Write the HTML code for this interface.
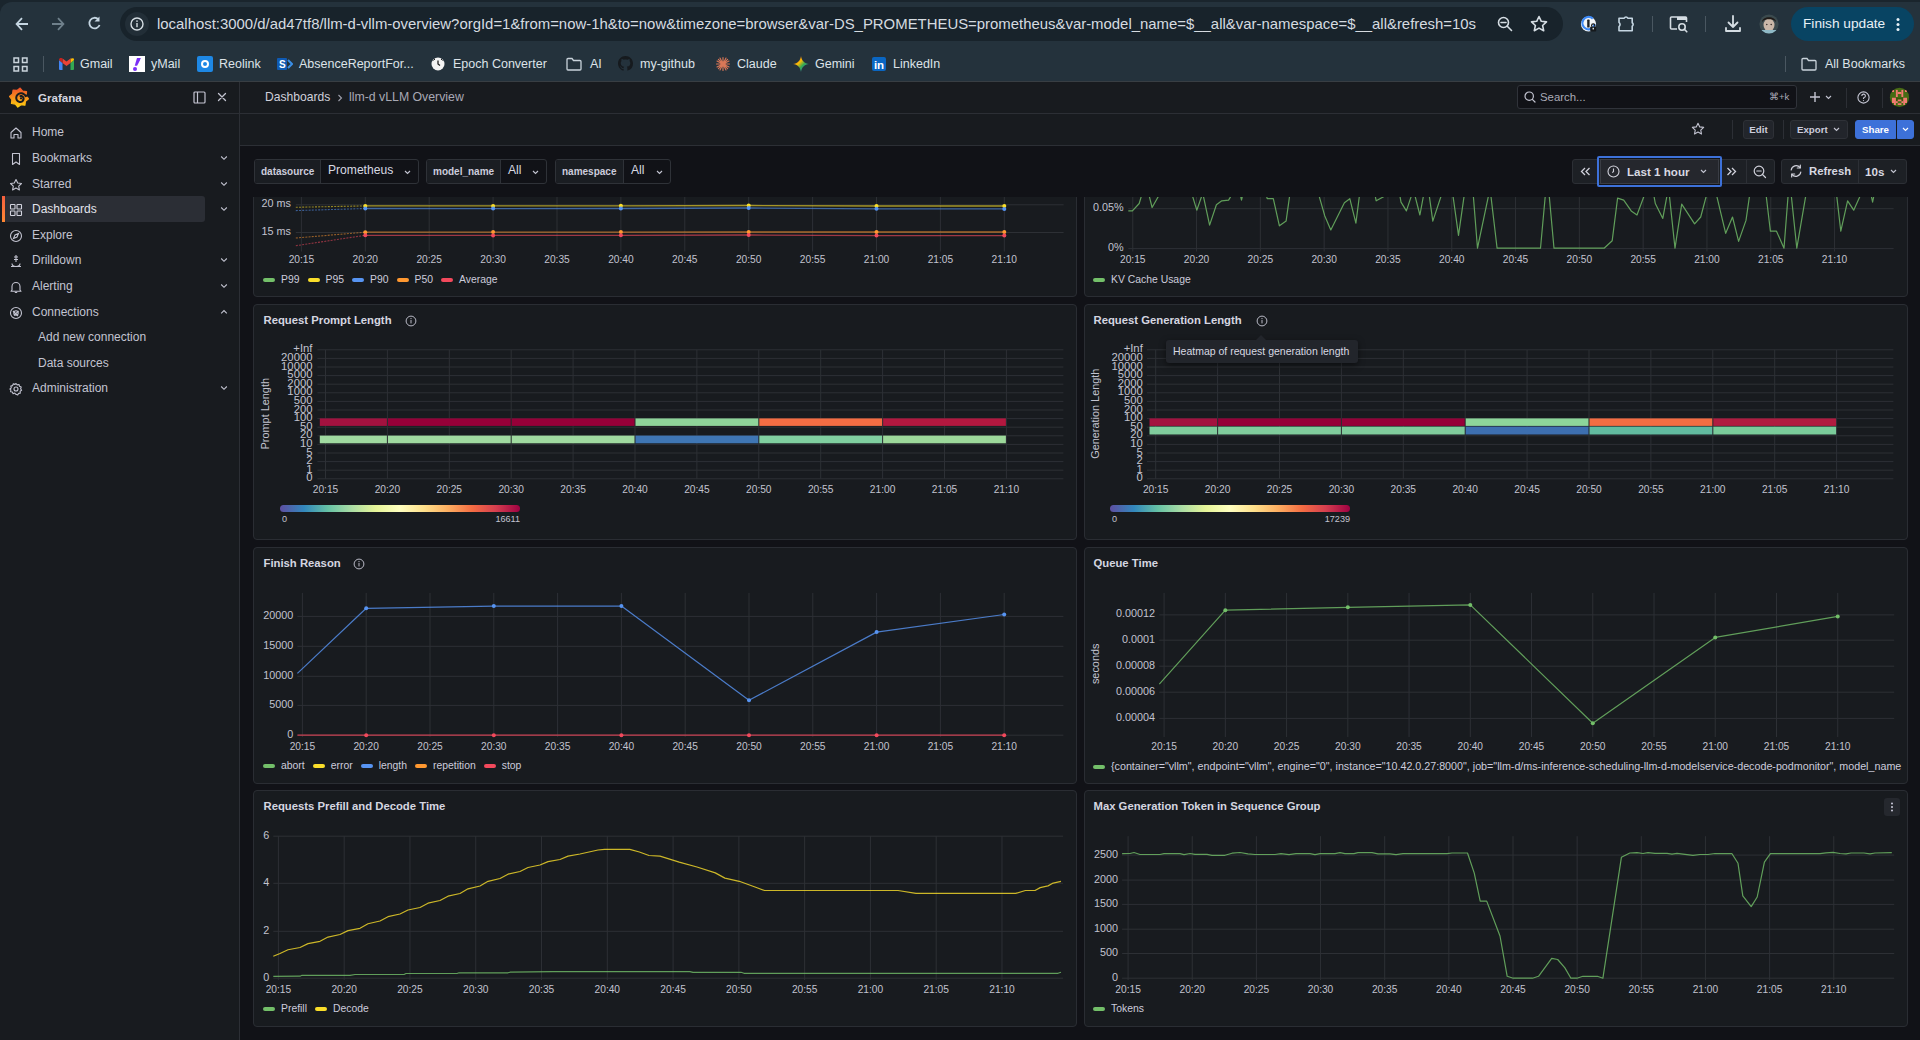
<!DOCTYPE html><html><head><meta charset="utf-8"><title>llm-d vLLM Overview - Grafana</title><style>
*{box-sizing:border-box;margin:0;padding:0}
html,body{width:1920px;height:1040px;overflow:hidden;background:#111217;font-family:"Liberation Sans",sans-serif;color:#ccccdc}
.abs{position:absolute}
#chrome{position:absolute;left:0;top:0;width:1920px;height:82px;background:#24323c}
#tabstrip{position:absolute;left:0;top:0;width:1920px;height:2px;background:#1a252d}
#omni{position:absolute;left:120px;top:7px;width:1443px;height:34px;border-radius:17px;background:#18232b}
#omni .info{position:absolute;left:5px;top:5px;width:24px;height:24px;border-radius:12px;background:#222e37}
#url{position:absolute;left:37px;top:0;height:34px;line-height:34px;font-size:14.92px;color:#d5dbe0;white-space:nowrap;letter-spacing:0px}
.bm{position:absolute;top:54px;height:20px;line-height:20px;font-size:12.5px;color:#dde3e8;white-space:nowrap}
#finish{position:absolute;left:1791px;top:7px;width:123px;height:34px;border-radius:17px;background:#084463;color:#e8f1f7;font-size:13.7px;line-height:34px;padding-left:12px}
#gnav{position:absolute;left:0;top:82px;width:1920px;height:32px;background:#181b1f;border-bottom:1px solid #2c2f35}
#side{position:absolute;left:0;top:114px;width:240px;height:926px;background:#181b1f;border-right:1px solid #2c2f35}
#side .sep{position:absolute;left:239px;top:-32px;width:1px;height:32px;background:#2c2f35}
.mi{position:absolute;left:0;width:239px;height:25px;font-size:12px;color:#c3c4d1;line-height:25px}
.mi .lbl{position:absolute;left:32px;top:0}
.mi svg{position:absolute;left:9px;top:6px}
.mi .chev{position:absolute;left:220px;top:9px}
#tb{position:absolute;left:240px;top:114px;width:1680px;height:32px;background:#181b1f;border-bottom:1px solid #2c2f35}
.btn{position:absolute;height:19px;border-radius:3px;background:#22252b;border:1px solid #2e3137;font-size:9.7px;color:#ccccdc;line-height:17px;text-align:center;font-weight:bold}
.var{position:absolute;top:159px;height:25px;border:1px solid #2f3238;border-radius:3px;font-size:10.4px;overflow:hidden;background:#111217}
.var .l{position:absolute;left:0;top:0;height:23px;line-height:23px;background:#1a1d22;border-right:1px solid #2f3238;color:#ccccdc;font-weight:bold;padding-left:6px;font-size:10px}
.var .v{position:absolute;top:-1px;height:23px;line-height:23px;color:#d8d9e2;font-size:12.1px}
.panel{position:absolute;background:#181b1f;border:1px solid #2a2d33;border-radius:4px;overflow:hidden}
.ptitle{position:absolute;left:9px;font-size:11.3px;font-weight:bold;color:#d5d6e0;white-space:nowrap}
.ax{font-family:"Liberation Sans",sans-serif;font-size:10px;fill:#c2c3cf}
.lg{position:absolute;font-size:10.4px;color:#ccccdc;white-space:nowrap;height:12px;line-height:12px}
.lg i{display:inline-block;width:12px;height:4px;border-radius:2px;vertical-align:middle;margin-right:6px;position:relative;top:0}
.lg span{margin-right:8px}
</style></head><body>
<div id="chrome"><div id="tabstrip"></div><div class="abs" style="left:0;top:2px;width:14px;height:14px;background:#1a252d"></div><div class="abs" style="left:0;top:2px;width:28px;height:28px;border-radius:12px 0 0 0;background:#24323c"></div><div class="abs" style="left:0;top:81px;width:1920px;height:1px;background:#383e43"></div>
<svg class="abs" style="left:14px;top:14px" width="20" height="20" viewBox="0 0 20 20"><path d="M14 10H3M8 4.2L2.6 10 8 15.8" fill="none" stroke="#c5d6e2" stroke-width="1.8" stroke-linejoin="miter"/></svg>
<svg class="abs" style="left:50px;top:14px" width="20" height="20" viewBox="0 0 20 20"><path d="M2 10h11M8 4.2L13.4 10 8 15.8" fill="none" stroke="#6f808b" stroke-width="1.8" stroke-linejoin="miter"/></svg>
<svg class="abs" style="left:85px;top:14px" width="20" height="20" viewBox="0 0 20 20"><path d="M13.3 5.2A5.3 5.3 0 1 0 14.6 11" fill="none" stroke="#c5d6e2" stroke-width="1.8"/><path d="M9.5 7.6h5V2.6z" fill="#c5d6e2"/></svg>
<div id="omni"><div class="info"><svg class="abs" style="left:5px;top:5px" width="14" height="14" viewBox="0 0 14 14"><circle cx="7" cy="7" r="6" fill="none" stroke="#d5dde3" stroke-width="1.4"/><rect x="6.3" y="6" width="1.4" height="4.2" fill="#d5dde3"/><circle cx="7" cy="4.1" r="0.85" fill="#d5dde3"/></svg></div>
<div id="url">localhost:3000/d/ad47tf8/llm-d-vllm-overview?orgId=1&amp;from=now-1h&amp;to=now&amp;timezone=browser&amp;var-DS_PROMETHEUS=prometheus&amp;var-model_name=$__all&amp;var-namespace=$__all&amp;refresh=10s</div>
<svg class="abs" style="left:1376px;top:8px" width="18" height="18" viewBox="0 0 18 18"><circle cx="7.5" cy="7.5" r="5" fill="none" stroke="#d5dde3" stroke-width="1.6"/><path d="M11.3 11.3L15.5 15.5M5 7.5h5" stroke="#d5dde3" stroke-width="1.6" stroke-linecap="round"/></svg>
<svg class="abs" style="left:1409px;top:7px" width="20" height="20" viewBox="0 0 20 20"><path d="M10 2.5l2.3 4.8 5.2.6-3.9 3.6 1.1 5.2L10 14.1l-4.7 2.6 1.1-5.2-3.9-3.6 5.2-.6z" fill="none" stroke="#d5dde3" stroke-width="1.6" stroke-linejoin="round"/></svg>
</div>
<svg class="abs" style="left:1580px;top:15px" width="18" height="18" viewBox="0 0 18 18"><circle cx="8.5" cy="9" r="7.6" fill="#f2f5f7"/><path d="M12.8 3.6A6.2 6.2 0 1 0 14.7 9" fill="none" stroke="#3d8af7" stroke-width="2.2"/><rect x="7.2" y="4.6" width="2.4" height="8" rx=".6" fill="#1d2226"/><rect x="10.2" y="11.4" width="6" height="5.2" rx="1" fill="#15191c"/><path d="M11.6 11.6v-1.2a1.6 1.6 0 0 1 3.2 0v1.2" fill="none" stroke="#15191c" stroke-width="1.2"/><rect x="12.6" y="12.8" width="1.3" height="1.6" fill="#f2f5f7"/></svg>
<svg class="abs" style="left:1617px;top:14px" width="20" height="19" viewBox="0 0 20 19"><path d="M2 4.2h5.2a2 2 0 0 1 3.6 0h4.4v4.6a2 2 0 0 1 0 3.4v4.6H2v-4.2a2.6 2.6 0 0 0 0-4.2z" fill="none" stroke="#c5d6e2" stroke-width="1.6" stroke-linejoin="round"/></svg>
<div class="abs" style="left:1652px;top:16px;width:1px;height:16px;background:#4a5761"></div>
<svg class="abs" style="left:1668px;top:14px" width="22" height="20" viewBox="0 0 22 20"><path d="M9 15H3.5a1 1 0 0 1-1-1V4a1 1 0 0 1 1-1h14a1 1 0 0 1 1 1v4" fill="none" stroke="#d5dde3" stroke-width="1.6"/><rect x="9" y="3" width="9.5" height="3" fill="#d5dde3"/><circle cx="14" cy="13" r="3.2" fill="none" stroke="#d5dde3" stroke-width="1.6"/><path d="M16.3 15.3L18.8 17.8" stroke="#d5dde3" stroke-width="1.6" stroke-linecap="round"/></svg>
<div class="abs" style="left:1705px;top:16px;width:1px;height:16px;background:#4a5761"></div>
<svg class="abs" style="left:1722px;top:13px" width="22" height="22" viewBox="0 0 22 22"><path d="M11 3v11M6.5 9.5L11 14l4.5-4.5M4 15v3h14v-3" fill="none" stroke="#d5dde3" stroke-width="1.8" stroke-linecap="round" stroke-linejoin="round"/></svg>
<svg class="abs" style="left:1759px;top:14px" width="20" height="20" viewBox="0 0 20 20"><defs><clipPath id="avp"><circle cx="10" cy="10" r="9.6"/></clipPath></defs><g clip-path="url(#avp)"><rect width="20" height="20" fill="#3b4a4e"/><ellipse cx="10" cy="11" rx="5.5" ry="6.5" fill="#c9b7a8"/><path d="M3 8C3 1.5 17 1.5 17 8L15.5 6.5C13 4.8 7 4.8 4.5 6.5z" fill="#1f1a17"/><rect x="2" y="16" width="16" height="5" fill="#8fb9c6"/><circle cx="7.8" cy="10.5" r=".8" fill="#3a3230"/><circle cx="12.2" cy="10.5" r=".8" fill="#3a3230"/></g></svg>
<div id="finish">Finish update<svg class="abs" style="left:104px;top:10px" width="6" height="15" viewBox="0 0 6 15"><circle cx="3" cy="2.5" r="1.5" fill="#e8f1f7"/><circle cx="3" cy="7.5" r="1.5" fill="#e8f1f7"/><circle cx="3" cy="12.5" r="1.5" fill="#e8f1f7"/></svg></div>
<svg class="abs" style="left:13px;top:57px" width="15" height="15" viewBox="0 0 15 15"><g fill="none" stroke="#c9d3db" stroke-width="1.5"><rect x="1" y="1" width="4.5" height="4.5"/><rect x="9.5" y="1" width="4.5" height="4.5"/><rect x="1" y="9.5" width="4.5" height="4.5"/><rect x="9.5" y="9.5" width="4.5" height="4.5"/></g></svg>
<div class="abs" style="left:43px;top:56px;width:1px;height:16px;background:#4a5761"></div>
<svg class="abs" style="left:59px;top:58px" width="15" height="12" viewBox="0 0 15 12"><path d="M0 2v9a1 1 0 0 0 1 1h2.5V5z" fill="#4285f4"/><path d="M11.5 12H14a1 1 0 0 0 1-1V2l-3.5 3z" fill="#34a853"/><path d="M11.5 0.5v4.5L15 2V1.5c0-1-1.2-1.6-2-1z" fill="#fbbc04"/><path d="M3.5 5L7.5 8l4-3V0.5L7.5 3.5 3.5 0.5z" fill="#ea4335"/><path d="M0 1.5V2l3.5 3V0.5l-1.5-1C1.2-0.1 0 0.5 0 1.5z" fill="#c5221f"/></svg>
<div class="bm" style="left:80px">Gmail</div>
<div class="abs" style="left:129px;top:56px;width:16px;height:16px;background:#fff"><div class="abs" style="left:4px;top:2px;width:6px;height:12px;background:#7b2ff7;transform:skewX(-20deg);border-radius:1px;clip-path:polygon(30% 0,100% 0,80% 65%,40% 65%)"></div><div class="abs" style="left:4px;top:11px;width:4px;height:4px;border-radius:2px;background:#7b2ff7"></div></div>
<div class="bm" style="left:151px">yMail</div>
<div class="abs" style="left:197px;top:56px;width:16px;height:16px;background:#1e88e5;border-radius:2px"><div class="abs" style="left:4px;top:4px;width:8px;height:8px;border-radius:4px;border:2px solid #fff;background:#1e88e5"></div></div>
<div class="bm" style="left:219px">Reolink</div>
<svg class="abs" style="left:277px;top:56px" width="16" height="16" viewBox="0 0 16 16"><rect x="0" y="2" width="10" height="12" rx="1" fill="#0f5ab3"/><text x="2" y="12" font-size="10" font-weight="bold" fill="#fff" font-family="Liberation Sans">S</text><path d="M11 4l4 4-4 4" fill="none" stroke="#3a8ee6" stroke-width="2"/></svg>
<div class="bm" style="left:299px">AbsenceReportFor...</div>
<svg class="abs" style="left:431px;top:57px" width="14" height="14" viewBox="0 0 14 14"><circle cx="7" cy="7" r="6.5" fill="#f4f4f4"/><path d="M7 3.5V7l2 1.5" fill="none" stroke="#222" stroke-width="1.3"/><path d="M4 2L2.5 3.5M10 2l1.5 1.5" stroke="#222" stroke-width="1"/></svg>
<div class="bm" style="left:453px">Epoch Converter</div>
<svg class="abs" style="left:566px;top:57px" width="16" height="14" viewBox="0 0 16 14"><path d="M1 2.5a1 1 0 0 1 1-1h4l1.5 2H14a1 1 0 0 1 1 1V12a1 1 0 0 1-1 1H2a1 1 0 0 1-1-1z" fill="none" stroke="#c9d3db" stroke-width="1.3"/></svg>
<div class="bm" style="left:590px">AI</div>
<svg class="abs" style="left:618px;top:56px" width="15" height="15" viewBox="0 0 16 16"><path fill="#161a1e" d="M8 0C3.58 0 0 3.58 0 8c0 3.54 2.29 6.53 5.47 7.59.4.07.55-.17.55-.38 0-.19-.01-.82-.01-1.49-2.01.37-2.53-.49-2.69-.94-.09-.23-.48-.94-.82-1.13-.28-.15-.68-.52-.01-.53.63-.01 1.08.58 1.23.82.72 1.21 1.87.87 2.33.66.07-.52.28-.87.51-1.07-1.78-.2-3.64-.89-3.64-3.95 0-.87.31-1.59.82-2.15-.08-.2-.36-1.02.08-2.12 0 0 .67-.21 2.2.82.64-.18 1.32-.27 2-.27.68 0 1.36.09 2 .27 1.53-1.04 2.2-.82 2.2-.82.44 1.1.16 1.92.08 2.12.51.56.82 1.27.82 2.15 0 3.07-1.87 3.75-3.65 3.95.29.25.54.73.54 1.48 0 1.07-.01 1.93-.01 2.2 0 .21.15.46.55.38A8.013 8.013 0 0016 8c0-4.42-3.58-8-8-8z"/></svg>
<div class="bm" style="left:640px">my-github</div>
<svg class="abs" style="left:715px;top:56px" width="16" height="16" viewBox="0 0 16 16"><g stroke="#d97757" stroke-width="1.15" stroke-linecap="round"><path d="M8 1.5v13M1.5 8h13M3.4 3.4l9.2 9.2M12.6 3.4l-9.2 9.2M5 2l6 12M11 2L5 14M2 5l12 6M14 5L2 11"/></g></svg>
<div class="bm" style="left:737px">Claude</div>
<svg class="abs" style="left:793px;top:56px" width="16" height="16" viewBox="0 0 16 16"><defs><linearGradient id="gm" x1="0" y1="0" x2="1" y2="1"><stop offset="0" stop-color="#ea4335"/><stop offset="0.4" stop-color="#fbbc04"/><stop offset="0.6" stop-color="#34a853"/><stop offset="1" stop-color="#4285f4"/></linearGradient></defs><path d="M8 0C8.5 4.5 11.5 7.5 16 8 11.5 8.5 8.5 11.5 8 16 7.5 11.5 4.5 8.5 0 8 4.5 7.5 7.5 4.5 8 0z" fill="url(#gm)"/></svg>
<div class="bm" style="left:815px">Gemini</div>
<div class="abs" style="left:872px;top:57px;width:14px;height:14px;background:#0a66c2;border-radius:2px;color:#fff;font-size:11.5px;font-weight:bold;line-height:16px;text-align:center">in</div>
<div class="bm" style="left:893px">LinkedIn</div>
<div class="abs" style="left:1785px;top:56px;width:1px;height:16px;background:#4a5761"></div>
<svg class="abs" style="left:1801px;top:57px" width="16" height="14" viewBox="0 0 16 14"><path d="M1 2.5a1 1 0 0 1 1-1h4l1.5 2H14a1 1 0 0 1 1 1V12a1 1 0 0 1-1 1H2a1 1 0 0 1-1-1z" fill="none" stroke="#c9d3db" stroke-width="1.3"/></svg>
<div class="bm" style="left:1825px">All Bookmarks</div>
</div>
<div id="gnav">
<svg class="abs" style="left:9px;top:5px" width="20" height="21" viewBox="9 87 20 21"><defs><linearGradient id="glg" x1="0" y1="1" x2="0" y2="0"><stop offset="0" stop-color="#ffd10f"/><stop offset="1" stop-color="#f0502a"/></linearGradient></defs><path d="M20.15 88.07 L22.63 91.15 L26.55 91.67 L26.13 95.61 L28.53 98.75 L25.45 101.23 L24.93 105.15 L20.99 104.73 L17.85 107.13 L15.37 104.05 L11.45 103.53 L11.87 99.59 L9.47 96.45 L12.55 93.97 L13.07 90.05 L17.01 90.47Z" fill="url(#glg)" stroke="url(#glg)" stroke-width="1.2" stroke-linejoin="round"/><path d="M28 95.2 L25.58 95.98 L25.21 95.40 L24.77 94.88 L24.27 94.43 L23.73 94.05 L23.15 93.74 L22.54 93.51 L21.91 93.36 L21.28 93.29 L20.64 93.30 L20.03 93.38 L19.43 93.55 L18.87 93.78 L18.34 94.08 L17.86 94.44 L17.44 94.85 L17.08 95.31 L16.78 95.80 L16.55 96.32 L16.38 96.86 L16.29 97.41 L16.27 97.96 L16.31 98.50 L16.43 99.02 L16.60 99.52 L16.84 99.99 L17.12 100.42 L17.46 100.80 L17.83 101.13 L18.24 101.41 L18.68 101.63 L19.13 101.80 L19.59 101.90 L20.06 101.94 L20.52 101.93 L20.96 101.86 L21.39 101.73 L21.79 101.55 L22.17 101.33 L22.50 101.06 L22.79 100.77 L23.04 100.44 L23.24 100.08 L23.40 99.72 L23.50 99.34 L23.55 98.95 L23.56 98.58 L23.51 98.21 L23.42 97.85 L23.29 97.52 L23.13 97.21 L22.92 96.93 L22.69 96.69 L22.43 96.48 L22.16 96.31 L21.87 96.17 L21.57 96.08 L21.27 96.03 L20.97 96.02 L20.69 96.05 L20.41 96.11" fill="none" stroke="#181b1f" stroke-width="2.0" stroke-linecap="round"/><circle cx="21.00" cy="98.30" r="1.1" fill="#181b1f"/></svg>
<div class="abs" style="left:38px;top:0;height:31px;line-height:31px;font-size:11.6px;font-weight:bold;color:#d3d4de">Grafana</div>
<svg class="abs" style="left:193px;top:9px" width="13" height="13" viewBox="0 0 13 13"><rect x="1" y="1" width="11" height="11" rx="1" fill="none" stroke="#c3c4d1" stroke-width="1.2"/><path d="M4.5 1v11" stroke="#c3c4d1" stroke-width="1.2"/></svg>
<svg class="abs" style="left:217px;top:10px" width="10" height="10" viewBox="0 0 10 10"><path d="M1.5 1.5l7 7M8.5 1.5l-7 7" stroke="#c3c4d1" stroke-width="1.3" stroke-linecap="round"/></svg>
<div class="abs" style="left:239px;top:0;width:1px;height:31px;background:#2c2f35"></div>
<div class="abs" style="left:265px;top:0;height:31px;line-height:31px;font-size:12.1px;color:#d0d1db">Dashboards</div>
<svg class="abs" style="left:337px;top:12px" width="6" height="8" viewBox="0 0 6 8"><path d="M1.5 1l3 3-3 3" fill="none" stroke="#9fa1ad" stroke-width="1.1"/></svg>
<div class="abs" style="left:349px;top:0;height:31px;line-height:31px;font-size:12.3px;color:#a8a9b5">llm-d vLLM Overview</div>
<div class="abs" style="left:1517px;top:3px;width:280px;height:24px;border:1px solid #30333a;border-radius:3px;background:#111217"></div>
<svg class="abs" style="left:1524px;top:9px" width="12" height="12" viewBox="0 0 12 12"><circle cx="5.2" cy="5.2" r="4.2" fill="none" stroke="#c3c4d1" stroke-width="1.2"/><path d="M8.3 8.3l2.7 2.7" stroke="#c3c4d1" stroke-width="1.2" stroke-linecap="round"/></svg>
<div class="abs" style="left:1540px;top:3px;height:24px;line-height:24px;font-size:11.4px;color:#a9aab6">Search...</div>
<div class="abs" style="left:1769px;top:3px;height:24px;line-height:24px;font-size:9.5px;color:#a9aab6">&#8984;+k</div>
<svg class="abs" style="left:1809px;top:9px" width="12" height="12" viewBox="0 0 12 12"><path d="M6 1v10M1 6h10" stroke="#c3c4d1" stroke-width="1.4"/></svg>
<svg class="abs" style="left:1825px;top:13px" width="7" height="5" viewBox="0 0 7 5"><path d="M1 1l2.5 2.5L6 1" fill="none" stroke="#c3c4d1" stroke-width="1.1"/></svg>
<div class="abs" style="left:1846px;top:6px;width:1px;height:20px;background:#2c2f35"></div>
<svg class="abs" style="left:1857px;top:9px" width="13" height="13" viewBox="0 0 13 13"><circle cx="6.5" cy="6.5" r="5.6" fill="none" stroke="#c3c4d1" stroke-width="1.1"/><path d="M4.8 5a1.8 1.8 0 1 1 2.4 1.6c-.5.2-.7.5-.7 1v.4" fill="none" stroke="#c3c4d1" stroke-width="1.1"/><circle cx="6.5" cy="9.6" r=".6" fill="#c3c4d1"/></svg>
<div class="abs" style="left:1882px;top:6px;width:1px;height:20px;background:#2c2f35"></div>
<svg class="abs" style="left:1889px;top:5px" width="22" height="22" viewBox="1889 87 22 22"><defs><clipPath id="avc"><circle cx="1899.5" cy="97.4" r="9.6"/></clipPath></defs><g clip-path="url(#avc)"><rect x="1889" y="87" width="22" height="22" fill="#466b14"/><rect x="1896" y="97.75" width="7.2" height="3.5" fill="#375a0a"/><rect x="1892" y="89.9" width="2.00" height="2.10" fill="#f27b72"/><rect x="1905" y="89.9" width="2.00" height="2.10" fill="#f27b72"/><rect x="1895.9" y="89.9" width="1.85" height="7.10" fill="#f27b72"/><rect x="1901.4" y="89.9" width="1.85" height="7.10" fill="#f27b72"/><rect x="1897.75" y="92" width="3.65" height="2.00" fill="#f27b72"/><rect x="1892" y="97.75" width="3.90" height="5.25" fill="#f27b72"/><rect x="1903.25" y="97.75" width="3.75" height="5.25" fill="#f27b72"/><rect x="1894" y="103" width="1.90" height="2.00" fill="#f27b72"/><rect x="1903.25" y="103" width="1.75" height="2.00" fill="#f27b72"/><rect x="1897.75" y="99.5" width="3.65" height="1.75" fill="#f27b72"/><rect x="1897.75" y="103.25" width="3.65" height="1.75" fill="#f27b72"/><rect x="1895.9" y="101.25" width="1.85" height="1.75" fill="#f27b72"/><rect x="1901.4" y="101.25" width="1.85" height="1.75" fill="#f27b72"/></g></svg>
</div>
<div id="side">
<div class="mi" style="top:5.699999999999999px"><svg width="14" height="14" viewBox="0 0 14 14"><path d="M2 6.5L7 2l5 4.5V12H9V8.5H5V12H2z" fill="none" stroke="#c3c4d1" stroke-width="1.1" stroke-linejoin="round"/></svg><span class="lbl">Home</span>
</div>
<div class="mi" style="top:31.7px"><svg width="14" height="14" viewBox="0 0 14 14"><path d="M3.5 1.5h7v11L7 10l-3.5 2.5z" fill="none" stroke="#c3c4d1" stroke-width="1.1" stroke-linejoin="round"/></svg><span class="lbl">Bookmarks</span>
<svg class="chev" width="8" height="6" viewBox="0 0 8 6"><path d="M1.2 1.5L4 4.3l2.8-2.8" fill="none" stroke="#c3c4d1" stroke-width="1.1"/></svg>
</div>
<div class="mi" style="top:57.7px"><svg width="14" height="14" viewBox="0 0 14 14"><path d="M7 1.5l1.7 3.5 3.8.5-2.8 2.6.7 3.8L7 10.1l-3.4 1.8.7-3.8L1.5 5.5l3.8-.5z" fill="none" stroke="#c3c4d1" stroke-width="1.1" stroke-linejoin="round"/></svg><span class="lbl">Starred</span>
<svg class="chev" width="8" height="6" viewBox="0 0 8 6"><path d="M1.2 1.5L4 4.3l2.8-2.8" fill="none" stroke="#c3c4d1" stroke-width="1.1"/></svg>
</div>
<div class="abs" style="left:4px;top:82.2px;width:201px;height:26px;border-radius:3px;background:#2b2e35"></div>
<div class="abs" style="left:2px;top:82.2px;width:2.5px;height:26px;background:linear-gradient(#f55f3e,#ff8833)"></div>
<div class="mi" style="top:82.7px;color:#e3e4ec;font-weight:normal"><svg width="14" height="14" viewBox="0 0 14 14"><g fill="none" stroke="#d3d4de" stroke-width="1.1"><rect x="1.5" y="1.5" width="4.5" height="4.5" rx=".6"/><rect x="8" y="1.5" width="4.5" height="4.5" rx=".6"/><rect x="1.5" y="8" width="4.5" height="4.5" rx=".6"/><rect x="8" y="8" width="4.5" height="4.5" rx=".6"/></g></svg><span class="lbl">Dashboards</span>
<svg class="chev" width="8" height="6" viewBox="0 0 8 6"><path d="M1.2 1.5L4 4.3l2.8-2.8" fill="none" stroke="#c3c4d1" stroke-width="1.1"/></svg>
</div>
<div class="mi" style="top:108.7px"><svg width="14" height="14" viewBox="0 0 14 14"><circle cx="7" cy="7" r="5.5" fill="none" stroke="#c3c4d1" stroke-width="1.1"/><path d="M9.5 4.5L8 8 4.5 9.5 6 6z" fill="none" stroke="#c3c4d1" stroke-width="1.1"/></svg><span class="lbl">Explore</span>
</div>
<div class="mi" style="top:133.7px"><svg width="14" height="14" viewBox="0 0 14 14"><path d="M7 1v7M5 3h4M5 5.5h4M3 9.5c0 1.8 1.8 3 4 3s4-1.2 4-3M2 12.5h10" fill="none" stroke="#c3c4d1" stroke-width="1.1"/></svg><span class="lbl">Drilldown</span>
<svg class="chev" width="8" height="6" viewBox="0 0 8 6"><path d="M1.2 1.5L4 4.3l2.8-2.8" fill="none" stroke="#c3c4d1" stroke-width="1.1"/></svg>
</div>
<div class="mi" style="top:159.7px"><svg width="14" height="14" viewBox="0 0 14 14"><path d="M3 10V6.5a4 4 0 0 1 8 0V10l1 1.3H2zM5.8 12.5h2.4" fill="none" stroke="#c3c4d1" stroke-width="1.1" stroke-linejoin="round"/></svg><span class="lbl">Alerting</span>
<svg class="chev" width="8" height="6" viewBox="0 0 8 6"><path d="M1.2 1.5L4 4.3l2.8-2.8" fill="none" stroke="#c3c4d1" stroke-width="1.1"/></svg>
</div>
<div class="mi" style="top:185.7px"><svg width="14" height="14" viewBox="0 0 14 14"><circle cx="7" cy="7" r="5.5" fill="none" stroke="#c3c4d1" stroke-width="1.1"/><path d="M4 5l5 5M5 9.5l4.5-4.5" stroke="#c3c4d1" stroke-width="1.1"/><circle cx="7" cy="7" r="2.2" fill="none" stroke="#c3c4d1" stroke-width="1.1"/></svg><span class="lbl">Connections</span>
<svg class="chev" width="8" height="6" viewBox="0 0 8 6"><path d="M1.2 4.3L4 1.5l2.8 2.8" fill="none" stroke="#c3c4d1" stroke-width="1.1"/></svg>
</div>
<div class="mi" style="top:261.7px"><svg width="14" height="14" viewBox="0 0 14 14"><circle cx="7" cy="7" r="2" fill="none" stroke="#c3c4d1" stroke-width="1.1"/><path d="M7 1.5l1.2 1.4 1.8-.4.5 1.8 1.7.8-.6 1.7 1 1.5-1.5 1 .2 1.8-1.8.3-.8 1.6-1.7-.7L7 12.5l-1.2-1.4-1.7.6-.7-1.7-1.8-.3.3-1.8L.9 7l1.4-1.1-.5-1.8 1.8-.5.6-1.7 1.8.5z" fill="none" stroke="#c3c4d1" stroke-width="1.1" stroke-linejoin="round"/></svg><span class="lbl">Administration</span>
<svg class="chev" width="8" height="6" viewBox="0 0 8 6"><path d="M1.2 1.5L4 4.3l2.8-2.8" fill="none" stroke="#c3c4d1" stroke-width="1.1"/></svg>
</div>
<div class="mi" style="top:211.2px"><span class="lbl" style="left:38px">Add new connection</span></div>
<div class="mi" style="top:237.2px"><span class="lbl" style="left:38px">Data sources</span></div>
</div>
<div id="tb">
<svg class="abs" style="left:1451px;top:8px" width="14" height="14" viewBox="0 0 14 14"><path d="M7 1.3l1.75 3.6 3.9.5-2.9 2.7.75 3.9L7 10.1l-3.5 1.9.75-3.9-2.9-2.7 3.9-.5z" fill="none" stroke="#c3c4d1" stroke-width="1.1" stroke-linejoin="round"/></svg>
<div class="abs" style="left:1492px;top:6px;width:1px;height:19px;background:#2c2f35"></div>
<div class="btn" style="left:1503px;top:6px;width:31px">Edit</div>
<div class="abs" style="left:1543px;top:6px;width:1px;height:19px;background:#2c2f35"></div>
<div class="btn" style="left:1550px;top:6px;width:58px;text-align:left;padding-left:6px">Export<svg class="abs" style="left:42px;top:6px" width="7" height="5" viewBox="0 0 7 5"><path d="M1 1l2.5 2.5L6 1" fill="none" stroke="#c3c4d1" stroke-width="1.1"/></svg></div>
<div class="btn" style="left:1615px;top:6px;width:41px;background:#3d71d9;border-color:#3d71d9;color:#fff;border-radius:3px 0 0 3px">Share</div>
<div class="btn" style="left:1657px;top:6px;width:17px;background:#3d71d9;border-color:#3d71d9;border-radius:0 3px 3px 0"><svg class="abs" style="left:4px;top:6px" width="7" height="5" viewBox="0 0 7 5"><path d="M1 1l2.5 2.5L6 1" fill="none" stroke="#fff" stroke-width="1.1"/></svg></div>
</div>
<div class="var" style="left:254px;width:165px"><div class="l" style="width:66px">datasource</div><div class="v" style="left:73px">Prometheus</div><svg class="abs" style="left:149px;top:10px" width="7" height="5" viewBox="0 0 7 5"><path d="M1 1l2.5 2.5L6 1" fill="none" stroke="#c3c4d1" stroke-width="1.1"/></svg></div>
<div class="var" style="left:426px;width:121px"><div class="l" style="width:74px">model_name</div><div class="v" style="left:81px">All</div><svg class="abs" style="left:105px;top:10px" width="7" height="5" viewBox="0 0 7 5"><path d="M1 1l2.5 2.5L6 1" fill="none" stroke="#c3c4d1" stroke-width="1.1"/></svg></div>
<div class="var" style="left:555px;width:116px"><div class="l" style="width:68px">namespace</div><div class="v" style="left:75px">All</div><svg class="abs" style="left:100px;top:10px" width="7" height="5" viewBox="0 0 7 5"><path d="M1 1l2.5 2.5L6 1" fill="none" stroke="#c3c4d1" stroke-width="1.1"/></svg></div>
<div class="abs" style="left:1572px;top:159px;width:203px;height:25px;border:1px solid #2c2f35;border-radius:3px;background:#1d2025"></div>
<svg class="abs" style="left:1580px;top:167px" width="11" height="9" viewBox="0 0 11 9"><path d="M5 1L1.5 4.5 5 8M9.5 1L6 4.5 9.5 8" fill="none" stroke="#d0d1db" stroke-width="1.3"/></svg>
<div class="abs" style="left:1597px;top:156px;width:125px;height:31px;border:2px solid #3d71d9;border-radius:2px"></div>
<div class="abs" style="left:1600px;top:159px;width:119px;height:25px;border:1px solid #3a3d44;background:#25272d"></div>
<svg class="abs" style="left:1607px;top:165px" width="13" height="13" viewBox="0 0 13 13"><circle cx="6.5" cy="6.5" r="5.5" fill="none" stroke="#d0d1db" stroke-width="1.1"/><path d="M6.5 3.5v3l-1.2 1.2" fill="none" stroke="#d0d1db" stroke-width="1.1"/></svg>
<div class="abs" style="left:1627px;top:159px;height:25px;line-height:25px;font-size:11.6px;font-weight:bold;color:#d8d9e2">Last 1 hour</div>
<svg class="abs" style="left:1700px;top:169px" width="7" height="5" viewBox="0 0 7 5"><path d="M1 1l2.5 2.5L6 1" fill="none" stroke="#c3c4d1" stroke-width="1.1"/></svg>
<svg class="abs" style="left:1726px;top:167px" width="11" height="9" viewBox="0 0 11 9"><path d="M1.5 1L5 4.5 1.5 8M6 1l3.5 3.5L6 8" fill="none" stroke="#d0d1db" stroke-width="1.3"/></svg>
<div class="abs" style="left:1746px;top:160px;width:1px;height:23px;background:#2c2f35"></div>
<svg class="abs" style="left:1753px;top:165px" width="14" height="14" viewBox="0 0 14 14"><circle cx="6" cy="6" r="4.8" fill="none" stroke="#d0d1db" stroke-width="1.2"/><path d="M3.8 6h4.4M9.5 9.5l3 3" stroke="#d0d1db" stroke-width="1.2" stroke-linecap="round"/></svg>
<div class="abs" style="left:1781px;top:159px;width:126px;height:25px;border:1px solid #2c2f35;border-radius:3px;background:#1d2025"></div>
<div class="abs" style="left:1858px;top:160px;width:1px;height:23px;background:#2c2f35"></div>
<svg class="abs" style="left:1789px;top:164px" width="14" height="14" viewBox="0 0 14 14"><path d="M2.2 6A5 5 0 0 1 11 3.5M11.8 8A5 5 0 0 1 3 10.5" fill="none" stroke="#d0d1db" stroke-width="1.2" stroke-linecap="round"/><path d="M11.3 1v3h-3M2.7 13v-3h3" fill="none" stroke="#d0d1db" stroke-width="1.2" stroke-linecap="round"/></svg>
<div class="abs" style="left:1809px;top:159px;height:25px;line-height:25px;font-size:11.3px;font-weight:bold;color:#d8d9e2">Refresh</div>
<div class="abs" style="left:1865px;top:159px;height:25px;line-height:25px;font-size:11.6px;font-weight:bold;color:#d8d9e2">10s</div>
<svg class="abs" style="left:1890px;top:169px" width="7" height="5" viewBox="0 0 7 5"><path d="M1 1l2.5 2.5L6 1" fill="none" stroke="#c3c4d1" stroke-width="1.1"/></svg>
<div class="abs" style="left:0;top:0;width:1920px;height:1040px;clip-path:inset(197px 0 0 240px)">
<div class="panel" style="left:253px;top:60px;width:824px;height:237px"></div>
<svg class="abs" style="left:253px;top:60px" width="824" height="237" viewBox="253 60 824 237">
<path d="M301.4 150V251.5" stroke="#2d3035" stroke-width="1"/><path d="M365.3 150V251.5" stroke="#2d3035" stroke-width="1"/><path d="M429.2 150V251.5" stroke="#2d3035" stroke-width="1"/><path d="M493.1 150V251.5" stroke="#2d3035" stroke-width="1"/><path d="M557 150V251.5" stroke="#2d3035" stroke-width="1"/><path d="M620.9 150V251.5" stroke="#2d3035" stroke-width="1"/><path d="M684.8 150V251.5" stroke="#2d3035" stroke-width="1"/><path d="M748.7 150V251.5" stroke="#2d3035" stroke-width="1"/><path d="M812.6 150V251.5" stroke="#2d3035" stroke-width="1"/><path d="M876.5 150V251.5" stroke="#2d3035" stroke-width="1"/><path d="M940.4 150V251.5" stroke="#2d3035" stroke-width="1"/><path d="M1004.3 150V251.5" stroke="#2d3035" stroke-width="1"/><path d="M295.8 204.8H1063.6" stroke="#2d3035" stroke-width="1"/><path d="M295.8 232.5H1063.6" stroke="#2d3035" stroke-width="1"/><text class="ax" style="font-size:10.8px" x="291" y="207.2" text-anchor="end">20 ms</text><text class="ax" style="font-size:10.8px" x="291" y="234.9" text-anchor="end">15 ms</text><text class="ax" style="font-size:10.2px" x="301.4" y="263.1" text-anchor="middle">20:15</text><text class="ax" style="font-size:10.2px" x="365.3" y="263.1" text-anchor="middle">20:20</text><text class="ax" style="font-size:10.2px" x="429.2" y="263.1" text-anchor="middle">20:25</text><text class="ax" style="font-size:10.2px" x="493.1" y="263.1" text-anchor="middle">20:30</text><text class="ax" style="font-size:10.2px" x="557" y="263.1" text-anchor="middle">20:35</text><text class="ax" style="font-size:10.2px" x="620.9" y="263.1" text-anchor="middle">20:40</text><text class="ax" style="font-size:10.2px" x="684.8" y="263.1" text-anchor="middle">20:45</text><text class="ax" style="font-size:10.2px" x="748.7" y="263.1" text-anchor="middle">20:50</text><text class="ax" style="font-size:10.2px" x="812.6" y="263.1" text-anchor="middle">20:55</text><text class="ax" style="font-size:10.2px" x="876.5" y="263.1" text-anchor="middle">21:00</text><text class="ax" style="font-size:10.2px" x="940.4" y="263.1" text-anchor="middle">21:05</text><text class="ax" style="font-size:10.2px" x="1004.3" y="263.1" text-anchor="middle">21:10</text><path d="M295.8 207.3 L365.3 205.9" fill="none" stroke="#fade2a" stroke-width="1.1" stroke-linejoin="round" stroke-dasharray="2 1.2" opacity="0.55"/><path d="M365.3 205.9 L493.1 205.9 L620.9 205.8 L748.7 205.5 L876.5 206 L1004.3 206" fill="none" stroke="#fade2a" stroke-width="1.3" stroke-linejoin="round" stroke-opacity="0.62"/><path d="M295.8 210.6 L365.3 208.5" fill="none" stroke="#5794f2" stroke-width="1.1" stroke-linejoin="round" stroke-dasharray="2 1.2" opacity="0.55"/><path d="M365.3 208.5 L493.1 208.6 L620.9 208.5 L748.7 208 L876.5 208.8 L1004.3 208.9" fill="none" stroke="#5794f2" stroke-width="1.3" stroke-linejoin="round" stroke-opacity="0.62"/><path d="M295.8 238 L365.3 232.2" fill="none" stroke="#ff9830" stroke-width="1.1" stroke-linejoin="round" stroke-dasharray="2 1.2" opacity="0.55"/><path d="M365.3 232.2 L493.1 232.1 L620.9 232.1 L748.7 232 L876.5 232 L1004.3 232" fill="none" stroke="#ff9830" stroke-width="1.3" stroke-linejoin="round" stroke-opacity="0.62"/><path d="M295.8 245.7 L365.3 235.3" fill="none" stroke="#f2495c" stroke-width="1.1" stroke-linejoin="round" stroke-dasharray="2 1.2" opacity="0.55"/><path d="M365.3 235.3 L493.1 235.4 L620.9 235.3 L748.7 235 L876.5 235.6 L1004.3 235.6" fill="none" stroke="#f2495c" stroke-width="1.3" stroke-linejoin="round" stroke-opacity="0.62"/><circle cx="365.3" cy="205.9" r="2" fill="#fade2a"/><circle cx="493.1" cy="205.9" r="2" fill="#fade2a"/><circle cx="620.9" cy="205.8" r="2" fill="#fade2a"/><circle cx="748.7" cy="205.5" r="2" fill="#fade2a"/><circle cx="876.5" cy="206" r="2" fill="#fade2a"/><circle cx="1004.3" cy="206" r="2" fill="#fade2a"/><circle cx="365.3" cy="208.5" r="2" fill="#5794f2"/><circle cx="493.1" cy="208.6" r="2" fill="#5794f2"/><circle cx="620.9" cy="208.5" r="2" fill="#5794f2"/><circle cx="748.7" cy="208" r="2" fill="#5794f2"/><circle cx="876.5" cy="208.8" r="2" fill="#5794f2"/><circle cx="1004.3" cy="208.9" r="2" fill="#5794f2"/><circle cx="365.3" cy="232.2" r="2" fill="#ff9830"/><circle cx="493.1" cy="232.1" r="2" fill="#ff9830"/><circle cx="620.9" cy="232.1" r="2" fill="#ff9830"/><circle cx="748.7" cy="232" r="2" fill="#ff9830"/><circle cx="876.5" cy="232" r="2" fill="#ff9830"/><circle cx="1004.3" cy="232" r="2" fill="#ff9830"/><circle cx="365.3" cy="235.3" r="2" fill="#f2495c"/><circle cx="493.1" cy="235.4" r="2" fill="#f2495c"/><circle cx="620.9" cy="235.3" r="2" fill="#f2495c"/><circle cx="748.7" cy="235" r="2" fill="#f2495c"/><circle cx="876.5" cy="235.6" r="2" fill="#f2495c"/><circle cx="1004.3" cy="235.6" r="2" fill="#f2495c"/>
</svg>
<div class="lg" style="left:263px;top:273.7px"><i style="background:#73bf69"></i><span>P99</span><i style="background:#fade2a"></i><span>P95</span><i style="background:#5794f2"></i><span>P90</span><i style="background:#ff9830"></i><span>P50</span><i style="background:#f2495c"></i><span>Average</span></div>
<div class="panel" style="left:1084px;top:60px;width:824px;height:237px"></div>
<svg class="abs" style="left:1084px;top:60px" width="824" height="237" viewBox="1084 60 824 237">
<path d="M1132.75 150V251.5" stroke="#2d3035" stroke-width="1"/><path d="M1196.55 150V251.5" stroke="#2d3035" stroke-width="1"/><path d="M1260.35 150V251.5" stroke="#2d3035" stroke-width="1"/><path d="M1324.15 150V251.5" stroke="#2d3035" stroke-width="1"/><path d="M1387.95 150V251.5" stroke="#2d3035" stroke-width="1"/><path d="M1451.75 150V251.5" stroke="#2d3035" stroke-width="1"/><path d="M1515.55 150V251.5" stroke="#2d3035" stroke-width="1"/><path d="M1579.35 150V251.5" stroke="#2d3035" stroke-width="1"/><path d="M1643.15 150V251.5" stroke="#2d3035" stroke-width="1"/><path d="M1706.95 150V251.5" stroke="#2d3035" stroke-width="1"/><path d="M1770.75 150V251.5" stroke="#2d3035" stroke-width="1"/><path d="M1834.55 150V251.5" stroke="#2d3035" stroke-width="1"/><path d="M1128.3 208.7H1893.6" stroke="#2d3035" stroke-width="1"/><path d="M1128.3 248.6H1893.6" stroke="#2d3035" stroke-width="1"/><text class="ax" style="font-size:10.8px" x="1123.6" y="211.2" text-anchor="end">0.05%</text><text class="ax" style="font-size:10.8px" x="1123.6" y="251.1" text-anchor="end">0%</text><text class="ax" style="font-size:10.2px" x="1132.75" y="263.1" text-anchor="middle">20:15</text><text class="ax" style="font-size:10.2px" x="1196.55" y="263.1" text-anchor="middle">20:20</text><text class="ax" style="font-size:10.2px" x="1260.35" y="263.1" text-anchor="middle">20:25</text><text class="ax" style="font-size:10.2px" x="1324.15" y="263.1" text-anchor="middle">20:30</text><text class="ax" style="font-size:10.2px" x="1387.95" y="263.1" text-anchor="middle">20:35</text><text class="ax" style="font-size:10.2px" x="1451.75" y="263.1" text-anchor="middle">20:40</text><text class="ax" style="font-size:10.2px" x="1515.55" y="263.1" text-anchor="middle">20:45</text><text class="ax" style="font-size:10.2px" x="1579.35" y="263.1" text-anchor="middle">20:50</text><text class="ax" style="font-size:10.2px" x="1643.15" y="263.1" text-anchor="middle">20:55</text><text class="ax" style="font-size:10.2px" x="1706.95" y="263.1" text-anchor="middle">21:00</text><text class="ax" style="font-size:10.2px" x="1770.75" y="263.1" text-anchor="middle">21:05</text><text class="ax" style="font-size:10.2px" x="1834.55" y="263.1" text-anchor="middle">21:10</text><path d="M1128.3 210.9 L1132.4 210.9 L1139.2 203.5 L1141.2 196.7 L1143 185 L1148 185 L1149.4 196.7 L1152.1 207.5 L1158.2 196.7 L1160 185 L1191 185 L1192.7 196.7 L1196.8 210.2 L1201.5 196.7 L1202.5 185 L1203.5 196.7 L1209.6 225.1 L1216.4 204.8 L1221.8 200.8 L1228.6 200.1 L1230.6 196.7 L1232 185 L1238 185 L1241.5 200.1 L1245 185 L1264 185 L1267.2 198.7 L1273.3 198.7 L1279.4 225.8 L1286.1 221.1 L1289.5 196.7 L1291 185 L1318 185 L1319.3 196.7 L1324.7 215.7 L1330.8 229.9 L1344.4 202.8 L1349.8 198.7 L1355.9 223.1 L1359.3 196.7 L1361 185 L1373 185 L1376.2 200.8 L1383.6 196.7 L1398 185 L1401 202.1 L1406.4 210.9 L1411.1 196.7 L1413 185 L1415.2 196.7 L1419.9 215 L1423.3 196.7 L1426 185 L1429.4 196.7 L1432.8 221.1 L1440.9 196.7 L1443 185 L1452 185 L1453.1 196.7 L1458.5 235.3 L1464 196.7 L1466 185 L1472 185 L1473.4 196.7 L1477.5 248.2 L1488.3 196.7 L1489.5 185 L1491 196.7 L1497.1 248.2 L1540.5 248.2 L1545.2 196.7 L1547 185 L1549.3 196.7 L1554 248.2 L1604.1 248.2 L1612.2 240.7 L1617.6 198.1 L1623.7 200.1 L1631.2 210.9 L1637 215 L1643.8 196.7 L1645 185 L1652 185 L1655.3 203.5 L1662.8 218.4 L1666.8 196.7 L1668 185 L1669.5 196.7 L1675 248.2 L1681.7 204.2 L1694.6 223.8 L1700.7 217 L1706.1 196.7 L1708 185 L1715 185 L1716.9 196.7 L1725.7 233.3 L1732.5 217 L1738.6 241.4 L1746 220.4 L1749.4 196.7 L1751 185 L1765 185 L1766.3 196.7 L1770.4 231.2 L1776.5 231.2 L1784 248.2 L1788 196.7 L1789.5 185 L1791.4 196.7 L1796.8 248.2 L1805.6 196.7 L1807 185 L1835 185 L1836.8 196.7 L1840.8 231.2 L1847.6 200.8 L1853.7 210.2 L1859.8 196.7 L1861 185 L1869 185 L1872.6 202.1 L1876 185" fill="none" stroke="#73bf69" stroke-width="1.2" stroke-linejoin="round" stroke-opacity="0.8"/>
</svg>
<div class="lg" style="left:1093px;top:273.7px"><i style="background:#73bf69"></i><span>KV Cache Usage</span></div>
<div class="panel" style="left:253px;top:304px;width:824px;height:236px"></div>
<svg class="abs" style="left:253px;top:304px" width="824" height="236" viewBox="253 304 824 236">
<defs><linearGradient id="sg1" x1="0" y1="0" x2="1" y2="0"><stop offset="0.0" stop-color="#5e4fa2"/><stop offset="0.1" stop-color="#3288bd"/><stop offset="0.2" stop-color="#66c2a5"/><stop offset="0.3" stop-color="#abdda4"/><stop offset="0.4" stop-color="#e6f598"/><stop offset="0.5" stop-color="#ffffbf"/><stop offset="0.6" stop-color="#fee08b"/><stop offset="0.7" stop-color="#fdae61"/><stop offset="0.8" stop-color="#f46d43"/><stop offset="0.9" stop-color="#d53e4f"/><stop offset="1.0" stop-color="#9e0142"/></linearGradient></defs><path d="M317.4 349.8H1063.4" stroke="#2d3035" stroke-width="1"/><path d="M317.4 358.4H1063.4" stroke="#2d3035" stroke-width="1"/><path d="M317.4 367H1063.4" stroke="#2d3035" stroke-width="1"/><path d="M317.4 375.6H1063.4" stroke="#2d3035" stroke-width="1"/><path d="M317.4 384.2H1063.4" stroke="#2d3035" stroke-width="1"/><path d="M317.4 392.8H1063.4" stroke="#2d3035" stroke-width="1"/><path d="M317.4 401.4H1063.4" stroke="#2d3035" stroke-width="1"/><path d="M317.4 410H1063.4" stroke="#2d3035" stroke-width="1"/><path d="M317.4 418.6H1063.4" stroke="#2d3035" stroke-width="1"/><path d="M317.4 427.2H1063.4" stroke="#2d3035" stroke-width="1"/><path d="M317.4 435.8H1063.4" stroke="#2d3035" stroke-width="1"/><path d="M317.4 444.4H1063.4" stroke="#2d3035" stroke-width="1"/><path d="M317.4 453H1063.4" stroke="#2d3035" stroke-width="1"/><path d="M317.4 461.6H1063.4" stroke="#2d3035" stroke-width="1"/><path d="M317.4 470.2H1063.4" stroke="#2d3035" stroke-width="1"/><path d="M317.4 478.8H1063.4" stroke="#2d3035" stroke-width="1"/><path d="M325.5 349.8V478.8" stroke="#2d3035" stroke-width="1"/><path d="M387.4 349.8V478.8" stroke="#2d3035" stroke-width="1"/><path d="M449.3 349.8V478.8" stroke="#2d3035" stroke-width="1"/><path d="M511.2 349.8V478.8" stroke="#2d3035" stroke-width="1"/><path d="M573.1 349.8V478.8" stroke="#2d3035" stroke-width="1"/><path d="M635 349.8V478.8" stroke="#2d3035" stroke-width="1"/><path d="M696.9 349.8V478.8" stroke="#2d3035" stroke-width="1"/><path d="M758.8 349.8V478.8" stroke="#2d3035" stroke-width="1"/><path d="M820.7 349.8V478.8" stroke="#2d3035" stroke-width="1"/><path d="M882.6 349.8V478.8" stroke="#2d3035" stroke-width="1"/><path d="M944.5 349.8V478.8" stroke="#2d3035" stroke-width="1"/><path d="M1006.4 349.8V478.8" stroke="#2d3035" stroke-width="1"/><text class="ax" style="font-size:11.3px" x="312.5" y="352.3" text-anchor="end">+Inf</text><text class="ax" style="font-size:11.3px" x="312.5" y="360.9" text-anchor="end">20000</text><text class="ax" style="font-size:11.3px" x="312.5" y="369.5" text-anchor="end">10000</text><text class="ax" style="font-size:11.3px" x="312.5" y="378.1" text-anchor="end">5000</text><text class="ax" style="font-size:11.3px" x="312.5" y="386.7" text-anchor="end">2000</text><text class="ax" style="font-size:11.3px" x="312.5" y="395.3" text-anchor="end">1000</text><text class="ax" style="font-size:11.3px" x="312.5" y="403.9" text-anchor="end">500</text><text class="ax" style="font-size:11.3px" x="312.5" y="412.5" text-anchor="end">200</text><text class="ax" style="font-size:11.3px" x="312.5" y="421.1" text-anchor="end">100</text><text class="ax" style="font-size:11.3px" x="312.5" y="429.7" text-anchor="end">50</text><text class="ax" style="font-size:11.3px" x="312.5" y="438.3" text-anchor="end">20</text><text class="ax" style="font-size:11.3px" x="312.5" y="446.9" text-anchor="end">10</text><text class="ax" style="font-size:11.3px" x="312.5" y="455.5" text-anchor="end">5</text><text class="ax" style="font-size:11.3px" x="312.5" y="464.1" text-anchor="end">2</text><text class="ax" style="font-size:11.3px" x="312.5" y="472.7" text-anchor="end">1</text><text class="ax" style="font-size:11.3px" x="312.5" y="481.3" text-anchor="end">0</text><text class="ax" style="font-size:10.9px" x="264.8" y="413.7" transform="rotate(-90 264.8 413.7)" text-anchor="middle" dominant-baseline="central">Prompt Length</text><text class="ax" style="font-size:10.2px" x="325.5" y="493.4" text-anchor="middle">20:15</text><text class="ax" style="font-size:10.2px" x="387.4" y="493.4" text-anchor="middle">20:20</text><text class="ax" style="font-size:10.2px" x="449.3" y="493.4" text-anchor="middle">20:25</text><text class="ax" style="font-size:10.2px" x="511.2" y="493.4" text-anchor="middle">20:30</text><text class="ax" style="font-size:10.2px" x="573.1" y="493.4" text-anchor="middle">20:35</text><text class="ax" style="font-size:10.2px" x="635" y="493.4" text-anchor="middle">20:40</text><text class="ax" style="font-size:10.2px" x="696.9" y="493.4" text-anchor="middle">20:45</text><text class="ax" style="font-size:10.2px" x="758.8" y="493.4" text-anchor="middle">20:50</text><text class="ax" style="font-size:10.2px" x="820.7" y="493.4" text-anchor="middle">20:55</text><text class="ax" style="font-size:10.2px" x="882.6" y="493.4" text-anchor="middle">21:00</text><text class="ax" style="font-size:10.2px" x="944.5" y="493.4" text-anchor="middle">21:05</text><text class="ax" style="font-size:10.2px" x="1006.4" y="493.4" text-anchor="middle">21:10</text><rect x="319.8" y="418.4" width="67.1" height="7.5" fill="#a3123f"/><rect x="387.9" y="418.4" width="122.8" height="7.5" fill="#960038"/><rect x="511.7" y="418.4" width="122.8" height="7.5" fill="#960038"/><rect x="635.5" y="418.4" width="122.8" height="7.5" fill="#8fd49a"/><rect x="759.3" y="418.4" width="122.8" height="7.5" fill="#f46d43"/><rect x="883.1" y="418.4" width="122.8" height="7.5" fill="#b3183f"/><rect x="319.8" y="435.6" width="67.1" height="7.7" fill="#a0daa0"/><rect x="387.9" y="435.6" width="122.8" height="7.7" fill="#a0daa0"/><rect x="511.7" y="435.6" width="122.8" height="7.7" fill="#a0daa0"/><rect x="635.5" y="435.6" width="122.8" height="7.7" fill="#3f76b4"/><rect x="759.3" y="435.6" width="122.8" height="7.7" fill="#80cfa0"/><rect x="883.1" y="435.6" width="122.8" height="7.7" fill="#9cd89a"/><rect x="280" y="505" width="240" height="7" rx="3.5" fill="url(#sg1)"/><text class="ax" style="font-size:9.1px" x="282" y="521.5">0</text><text class="ax" style="font-size:9.1px" x="520" y="521.5" text-anchor="end">16611</text>
</svg>
<div class="ptitle" style="left:263.5px;top:313px;height:14px;line-height:14px">Request Prompt Length</div>
<svg class="abs" style="left:404.7px;top:314.8px" width="12" height="12" viewBox="0 0 12 12"><circle cx="6" cy="6" r="4.9" fill="none" stroke="#b9bac6" stroke-width="1"/><rect x="5.5" y="5" width="1" height="3.4" fill="#b9bac6"/><circle cx="6" cy="3.6" r=".65" fill="#b9bac6"/></svg>
<div class="panel" style="left:1084px;top:304px;width:824px;height:236px"></div>
<svg class="abs" style="left:1084px;top:304px" width="824" height="236" viewBox="1084 304 824 236">
<defs><linearGradient id="sg2" x1="0" y1="0" x2="1" y2="0"><stop offset="0.0" stop-color="#5e4fa2"/><stop offset="0.1" stop-color="#3288bd"/><stop offset="0.2" stop-color="#66c2a5"/><stop offset="0.3" stop-color="#abdda4"/><stop offset="0.4" stop-color="#e6f598"/><stop offset="0.5" stop-color="#ffffbf"/><stop offset="0.6" stop-color="#fee08b"/><stop offset="0.7" stop-color="#fdae61"/><stop offset="0.8" stop-color="#f46d43"/><stop offset="0.9" stop-color="#d53e4f"/><stop offset="1.0" stop-color="#9e0142"/></linearGradient></defs><path d="M1147 349.8H1893.4" stroke="#2d3035" stroke-width="1"/><path d="M1147 358.4H1893.4" stroke="#2d3035" stroke-width="1"/><path d="M1147 367H1893.4" stroke="#2d3035" stroke-width="1"/><path d="M1147 375.6H1893.4" stroke="#2d3035" stroke-width="1"/><path d="M1147 384.2H1893.4" stroke="#2d3035" stroke-width="1"/><path d="M1147 392.8H1893.4" stroke="#2d3035" stroke-width="1"/><path d="M1147 401.4H1893.4" stroke="#2d3035" stroke-width="1"/><path d="M1147 410H1893.4" stroke="#2d3035" stroke-width="1"/><path d="M1147 418.6H1893.4" stroke="#2d3035" stroke-width="1"/><path d="M1147 427.2H1893.4" stroke="#2d3035" stroke-width="1"/><path d="M1147 435.8H1893.4" stroke="#2d3035" stroke-width="1"/><path d="M1147 444.4H1893.4" stroke="#2d3035" stroke-width="1"/><path d="M1147 453H1893.4" stroke="#2d3035" stroke-width="1"/><path d="M1147 461.6H1893.4" stroke="#2d3035" stroke-width="1"/><path d="M1147 470.2H1893.4" stroke="#2d3035" stroke-width="1"/><path d="M1147 478.8H1893.4" stroke="#2d3035" stroke-width="1"/><path d="M1155.7 349.8V478.8" stroke="#2d3035" stroke-width="1"/><path d="M1217.6 349.8V478.8" stroke="#2d3035" stroke-width="1"/><path d="M1279.5 349.8V478.8" stroke="#2d3035" stroke-width="1"/><path d="M1341.4 349.8V478.8" stroke="#2d3035" stroke-width="1"/><path d="M1403.3 349.8V478.8" stroke="#2d3035" stroke-width="1"/><path d="M1465.2 349.8V478.8" stroke="#2d3035" stroke-width="1"/><path d="M1527.1 349.8V478.8" stroke="#2d3035" stroke-width="1"/><path d="M1589 349.8V478.8" stroke="#2d3035" stroke-width="1"/><path d="M1650.9 349.8V478.8" stroke="#2d3035" stroke-width="1"/><path d="M1712.8 349.8V478.8" stroke="#2d3035" stroke-width="1"/><path d="M1774.7 349.8V478.8" stroke="#2d3035" stroke-width="1"/><path d="M1836.6 349.8V478.8" stroke="#2d3035" stroke-width="1"/><text class="ax" style="font-size:11.3px" x="1142.8" y="352.3" text-anchor="end">+Inf</text><text class="ax" style="font-size:11.3px" x="1142.8" y="360.9" text-anchor="end">20000</text><text class="ax" style="font-size:11.3px" x="1142.8" y="369.5" text-anchor="end">10000</text><text class="ax" style="font-size:11.3px" x="1142.8" y="378.1" text-anchor="end">5000</text><text class="ax" style="font-size:11.3px" x="1142.8" y="386.7" text-anchor="end">2000</text><text class="ax" style="font-size:11.3px" x="1142.8" y="395.3" text-anchor="end">1000</text><text class="ax" style="font-size:11.3px" x="1142.8" y="403.9" text-anchor="end">500</text><text class="ax" style="font-size:11.3px" x="1142.8" y="412.5" text-anchor="end">200</text><text class="ax" style="font-size:11.3px" x="1142.8" y="421.1" text-anchor="end">100</text><text class="ax" style="font-size:11.3px" x="1142.8" y="429.7" text-anchor="end">50</text><text class="ax" style="font-size:11.3px" x="1142.8" y="438.3" text-anchor="end">20</text><text class="ax" style="font-size:11.3px" x="1142.8" y="446.9" text-anchor="end">10</text><text class="ax" style="font-size:11.3px" x="1142.8" y="455.5" text-anchor="end">5</text><text class="ax" style="font-size:11.3px" x="1142.8" y="464.1" text-anchor="end">2</text><text class="ax" style="font-size:11.3px" x="1142.8" y="472.7" text-anchor="end">1</text><text class="ax" style="font-size:11.3px" x="1142.8" y="481.3" text-anchor="end">0</text><text class="ax" style="font-size:10.9px" x="1095" y="413.7" transform="rotate(-90 1095 413.7)" text-anchor="middle" dominant-baseline="central">Generation Length</text><text class="ax" style="font-size:10.2px" x="1155.7" y="493.4" text-anchor="middle">20:15</text><text class="ax" style="font-size:10.2px" x="1217.6" y="493.4" text-anchor="middle">20:20</text><text class="ax" style="font-size:10.2px" x="1279.5" y="493.4" text-anchor="middle">20:25</text><text class="ax" style="font-size:10.2px" x="1341.4" y="493.4" text-anchor="middle">20:30</text><text class="ax" style="font-size:10.2px" x="1403.3" y="493.4" text-anchor="middle">20:35</text><text class="ax" style="font-size:10.2px" x="1465.2" y="493.4" text-anchor="middle">20:40</text><text class="ax" style="font-size:10.2px" x="1527.1" y="493.4" text-anchor="middle">20:45</text><text class="ax" style="font-size:10.2px" x="1589" y="493.4" text-anchor="middle">20:50</text><text class="ax" style="font-size:10.2px" x="1650.9" y="493.4" text-anchor="middle">20:55</text><text class="ax" style="font-size:10.2px" x="1712.8" y="493.4" text-anchor="middle">21:00</text><text class="ax" style="font-size:10.2px" x="1774.7" y="493.4" text-anchor="middle">21:05</text><text class="ax" style="font-size:10.2px" x="1836.6" y="493.4" text-anchor="middle">21:10</text><rect x="1149.5" y="418.4" width="67.6" height="7.5" fill="#a3123f"/><rect x="1218.1" y="418.4" width="122.8" height="7.5" fill="#960038"/><rect x="1341.9" y="418.4" width="122.8" height="7.5" fill="#960038"/><rect x="1465.7" y="418.4" width="122.8" height="7.5" fill="#8dd69a"/><rect x="1589.5" y="418.4" width="122.8" height="7.5" fill="#f46d43"/><rect x="1713.3" y="418.4" width="122.8" height="7.5" fill="#b01c40"/><rect x="1149.5" y="426.6" width="67.6" height="7.9" fill="#80cc9c"/><rect x="1218.1" y="426.6" width="122.8" height="7.9" fill="#80cc9c"/><rect x="1341.9" y="426.6" width="122.8" height="7.9" fill="#80cc9c"/><rect x="1465.7" y="426.6" width="122.8" height="7.9" fill="#3d6fb0"/><rect x="1589.5" y="426.6" width="122.8" height="7.9" fill="#62bba0"/><rect x="1713.3" y="426.6" width="122.8" height="7.9" fill="#7acb9a"/><rect x="1110" y="505" width="240" height="7" rx="3.5" fill="url(#sg2)"/><text class="ax" style="font-size:9.1px" x="1112" y="521.5">0</text><text class="ax" style="font-size:9.1px" x="1350" y="521.5" text-anchor="end">17239</text>
</svg>
<div class="ptitle" style="left:1093.5px;top:313px;height:14px;line-height:14px">Request Generation Length</div>
<svg class="abs" style="left:1255.7px;top:314.8px" width="12" height="12" viewBox="0 0 12 12"><circle cx="6" cy="6" r="4.9" fill="none" stroke="#b9bac6" stroke-width="1"/><rect x="5.5" y="5" width="1" height="3.4" fill="#b9bac6"/><circle cx="6" cy="3.6" r=".65" fill="#b9bac6"/></svg>
<div class="abs" style="left:1166px;top:340px;width:192px;height:23px;background:#22252b;border-radius:3px;box-shadow:0 2px 6px rgba(0,0,0,.5);font-size:10.5px;color:#d8d9e2;line-height:23px;padding-left:7px;white-space:nowrap">Heatmap of request generation length</div>
<svg class="abs" style="left:1255px;top:334px" width="12" height="7" viewBox="0 0 12 7"><path d="M0 7L6 1l6 6z" fill="#22252b"/></svg>
<div class="panel" style="left:253px;top:547px;width:824px;height:236.5px"></div>
<svg class="abs" style="left:253px;top:547px" width="824" height="236.5" viewBox="253 547 824 236.5">
<path d="M302.4 592.9V737" stroke="#2d3035" stroke-width="1"/><path d="M366.2 592.9V737" stroke="#2d3035" stroke-width="1"/><path d="M430 592.9V737" stroke="#2d3035" stroke-width="1"/><path d="M493.8 592.9V737" stroke="#2d3035" stroke-width="1"/><path d="M557.6 592.9V737" stroke="#2d3035" stroke-width="1"/><path d="M621.4 592.9V737" stroke="#2d3035" stroke-width="1"/><path d="M685.2 592.9V737" stroke="#2d3035" stroke-width="1"/><path d="M749 592.9V737" stroke="#2d3035" stroke-width="1"/><path d="M812.8 592.9V737" stroke="#2d3035" stroke-width="1"/><path d="M876.6 592.9V737" stroke="#2d3035" stroke-width="1"/><path d="M940.4 592.9V737" stroke="#2d3035" stroke-width="1"/><path d="M1004.2 592.9V737" stroke="#2d3035" stroke-width="1"/><path d="M297.4 616.4H1063.4" stroke="#2d3035" stroke-width="1"/><path d="M297.4 646.3H1063.4" stroke="#2d3035" stroke-width="1"/><path d="M297.4 676.3H1063.4" stroke="#2d3035" stroke-width="1"/><path d="M297.4 705.4H1063.4" stroke="#2d3035" stroke-width="1"/><path d="M297.4 735.2H1063.4" stroke="#2d3035" stroke-width="1"/><text class="ax" style="font-size:10.8px" x="293.3" y="618.9" text-anchor="end">20000</text><text class="ax" style="font-size:10.8px" x="293.3" y="648.8" text-anchor="end">15000</text><text class="ax" style="font-size:10.8px" x="293.3" y="678.8" text-anchor="end">10000</text><text class="ax" style="font-size:10.8px" x="293.3" y="707.9" text-anchor="end">5000</text><text class="ax" style="font-size:10.8px" x="293.3" y="737.7" text-anchor="end">0</text><text class="ax" style="font-size:10.2px" x="302.4" y="749.6" text-anchor="middle">20:15</text><text class="ax" style="font-size:10.2px" x="366.2" y="749.6" text-anchor="middle">20:20</text><text class="ax" style="font-size:10.2px" x="430" y="749.6" text-anchor="middle">20:25</text><text class="ax" style="font-size:10.2px" x="493.8" y="749.6" text-anchor="middle">20:30</text><text class="ax" style="font-size:10.2px" x="557.6" y="749.6" text-anchor="middle">20:35</text><text class="ax" style="font-size:10.2px" x="621.4" y="749.6" text-anchor="middle">20:40</text><text class="ax" style="font-size:10.2px" x="685.2" y="749.6" text-anchor="middle">20:45</text><text class="ax" style="font-size:10.2px" x="749" y="749.6" text-anchor="middle">20:50</text><text class="ax" style="font-size:10.2px" x="812.8" y="749.6" text-anchor="middle">20:55</text><text class="ax" style="font-size:10.2px" x="876.6" y="749.6" text-anchor="middle">21:00</text><text class="ax" style="font-size:10.2px" x="940.4" y="749.6" text-anchor="middle">21:05</text><text class="ax" style="font-size:10.2px" x="1004.2" y="749.6" text-anchor="middle">21:10</text><path d="M297.4 673.4 L366.2 608.3 L493.8 606.1 L621.4 606.1 L749 700.3 L876.6 632.1 L1004.2 614.5" fill="none" stroke="#5794f2" stroke-width="1.2" stroke-linejoin="round" stroke-opacity="0.8"/><circle cx="366.2" cy="608.3" r="2" fill="#5794f2"/><circle cx="493.8" cy="606.1" r="2" fill="#5794f2"/><circle cx="621.4" cy="606.1" r="2" fill="#5794f2"/><circle cx="749" cy="700.3" r="2" fill="#5794f2"/><circle cx="876.6" cy="632.1" r="2" fill="#5794f2"/><circle cx="1004.2" cy="614.5" r="2" fill="#5794f2"/><path d="M297.4 735.2 L1004.2 735.2" fill="none" stroke="#f2495c" stroke-width="1.3" stroke-linejoin="round" stroke-opacity="0.8"/><circle cx="366.2" cy="735.2" r="2" fill="#f2495c"/><circle cx="493.8" cy="735.2" r="2" fill="#f2495c"/><circle cx="621.4" cy="735.2" r="2" fill="#f2495c"/><circle cx="749" cy="735.2" r="2" fill="#f2495c"/><circle cx="876.6" cy="735.2" r="2" fill="#f2495c"/><circle cx="1004.2" cy="735.2" r="2" fill="#f2495c"/>
</svg>
<div class="ptitle" style="left:263.5px;top:556.3px;height:14px;line-height:14px">Finish Reason</div>
<svg class="abs" style="left:352.7px;top:558.0999999999999px" width="12" height="12" viewBox="0 0 12 12"><circle cx="6" cy="6" r="4.9" fill="none" stroke="#b9bac6" stroke-width="1"/><rect x="5.5" y="5" width="1" height="3.4" fill="#b9bac6"/><circle cx="6" cy="3.6" r=".65" fill="#b9bac6"/></svg>
<div class="lg" style="left:263px;top:759.9000000000001px"><i style="background:#73bf69"></i><span>abort</span><i style="background:#fade2a"></i><span>error</span><i style="background:#5794f2"></i><span>length</span><i style="background:#ff9830"></i><span>repetition</span><i style="background:#f2495c"></i><span>stop</span></div>
<div class="panel" style="left:1084px;top:547px;width:824px;height:236.5px"></div>
<svg class="abs" style="left:1084px;top:547px" width="824" height="236.5" viewBox="1084 547 824 236.5">
<path d="M1164.1 592.9V737" stroke="#2d3035" stroke-width="1"/><path d="M1225.34 592.9V737" stroke="#2d3035" stroke-width="1"/><path d="M1286.58 592.9V737" stroke="#2d3035" stroke-width="1"/><path d="M1347.82 592.9V737" stroke="#2d3035" stroke-width="1"/><path d="M1409.06 592.9V737" stroke="#2d3035" stroke-width="1"/><path d="M1470.3 592.9V737" stroke="#2d3035" stroke-width="1"/><path d="M1531.54 592.9V737" stroke="#2d3035" stroke-width="1"/><path d="M1592.78 592.9V737" stroke="#2d3035" stroke-width="1"/><path d="M1654.02 592.9V737" stroke="#2d3035" stroke-width="1"/><path d="M1715.26 592.9V737" stroke="#2d3035" stroke-width="1"/><path d="M1776.5 592.9V737" stroke="#2d3035" stroke-width="1"/><path d="M1837.74 592.9V737" stroke="#2d3035" stroke-width="1"/><path d="M1159.3 614.9H1894.2" stroke="#2d3035" stroke-width="1"/><path d="M1159.3 640.2H1894.2" stroke="#2d3035" stroke-width="1"/><path d="M1159.3 666.2H1894.2" stroke="#2d3035" stroke-width="1"/><path d="M1159.3 692.2H1894.2" stroke="#2d3035" stroke-width="1"/><path d="M1159.3 718.4H1894.2" stroke="#2d3035" stroke-width="1"/><text class="ax" style="font-size:10.8px" x="1155" y="617.4" text-anchor="end">0.00012</text><text class="ax" style="font-size:10.8px" x="1155" y="642.7" text-anchor="end">0.0001</text><text class="ax" style="font-size:10.8px" x="1155" y="668.7" text-anchor="end">0.00008</text><text class="ax" style="font-size:10.8px" x="1155" y="694.7" text-anchor="end">0.00006</text><text class="ax" style="font-size:10.8px" x="1155" y="720.9" text-anchor="end">0.00004</text><text class="ax" style="font-size:10.2px" x="1164.1" y="749.6" text-anchor="middle">20:15</text><text class="ax" style="font-size:10.2px" x="1225.34" y="749.6" text-anchor="middle">20:20</text><text class="ax" style="font-size:10.2px" x="1286.58" y="749.6" text-anchor="middle">20:25</text><text class="ax" style="font-size:10.2px" x="1347.82" y="749.6" text-anchor="middle">20:30</text><text class="ax" style="font-size:10.2px" x="1409.06" y="749.6" text-anchor="middle">20:35</text><text class="ax" style="font-size:10.2px" x="1470.3" y="749.6" text-anchor="middle">20:40</text><text class="ax" style="font-size:10.2px" x="1531.54" y="749.6" text-anchor="middle">20:45</text><text class="ax" style="font-size:10.2px" x="1592.78" y="749.6" text-anchor="middle">20:50</text><text class="ax" style="font-size:10.2px" x="1654.02" y="749.6" text-anchor="middle">20:55</text><text class="ax" style="font-size:10.2px" x="1715.26" y="749.6" text-anchor="middle">21:00</text><text class="ax" style="font-size:10.2px" x="1776.5" y="749.6" text-anchor="middle">21:05</text><text class="ax" style="font-size:10.2px" x="1837.74" y="749.6" text-anchor="middle">21:10</text><text class="ax" style="font-size:10.9px" x="1094.9" y="663.8" transform="rotate(-90 1094.9 663.8)" text-anchor="middle" dominant-baseline="central">seconds</text><path d="M1159.3 684.2 L1225.34 610.2 L1347.82 607.3 L1470.3 604.9 L1592.78 723.2 L1715.26 637.4 L1837.74 616.4" fill="none" stroke="#73bf69" stroke-width="1.2" stroke-linejoin="round" stroke-opacity="0.8"/><circle cx="1225.34" cy="610.2" r="2" fill="#73bf69"/><circle cx="1347.82" cy="607.3" r="2" fill="#73bf69"/><circle cx="1470.3" cy="604.9" r="2" fill="#73bf69"/><circle cx="1592.78" cy="723.2" r="2" fill="#73bf69"/><circle cx="1715.26" cy="637.4" r="2" fill="#73bf69"/><circle cx="1837.74" cy="616.4" r="2" fill="#73bf69"/>
</svg>
<div class="ptitle" style="left:1093.5px;top:556.3px;height:14px;line-height:14px">Queue Time</div>
<div class="lg" style="left:1093px;top:759.9px;width:810px;overflow:hidden;font-size:10.72px"><i style="background:#73bf69"></i>{container="vllm", endpoint="vllm", engine="0", instance="10.42.0.27:8000", job="llm-d/ms-inference-scheduling-llm-d-modelservice-decode-podmonitor", model_name</div>
<div class="panel" style="left:253px;top:790px;width:824px;height:236.5px"></div>
<svg class="abs" style="left:253px;top:790px" width="824" height="236.5" viewBox="253 790 824 236.5">
<path d="M278.4 836.2V980" stroke="#2d3035" stroke-width="1"/><path d="M344.18 836.2V980" stroke="#2d3035" stroke-width="1"/><path d="M409.96 836.2V980" stroke="#2d3035" stroke-width="1"/><path d="M475.74 836.2V980" stroke="#2d3035" stroke-width="1"/><path d="M541.52 836.2V980" stroke="#2d3035" stroke-width="1"/><path d="M607.3 836.2V980" stroke="#2d3035" stroke-width="1"/><path d="M673.08 836.2V980" stroke="#2d3035" stroke-width="1"/><path d="M738.86 836.2V980" stroke="#2d3035" stroke-width="1"/><path d="M804.64 836.2V980" stroke="#2d3035" stroke-width="1"/><path d="M870.42 836.2V980" stroke="#2d3035" stroke-width="1"/><path d="M936.2 836.2V980" stroke="#2d3035" stroke-width="1"/><path d="M1001.98 836.2V980" stroke="#2d3035" stroke-width="1"/><path d="M273.3 836.2H1063.1" stroke="#2d3035" stroke-width="1"/><path d="M273.3 883.3H1063.1" stroke="#2d3035" stroke-width="1"/><path d="M273.3 931.3H1063.1" stroke="#2d3035" stroke-width="1"/><path d="M273.3 978.2H1063.1" stroke="#2d3035" stroke-width="1"/><text class="ax" style="font-size:10.8px" x="269.2" y="838.7" text-anchor="end">6</text><text class="ax" style="font-size:10.8px" x="269.2" y="885.8" text-anchor="end">4</text><text class="ax" style="font-size:10.8px" x="269.2" y="933.8" text-anchor="end">2</text><text class="ax" style="font-size:10.8px" x="269.2" y="980.7" text-anchor="end">0</text><text class="ax" style="font-size:10.2px" x="278.4" y="992.6" text-anchor="middle">20:15</text><text class="ax" style="font-size:10.2px" x="344.18" y="992.6" text-anchor="middle">20:20</text><text class="ax" style="font-size:10.2px" x="409.96" y="992.6" text-anchor="middle">20:25</text><text class="ax" style="font-size:10.2px" x="475.74" y="992.6" text-anchor="middle">20:30</text><text class="ax" style="font-size:10.2px" x="541.52" y="992.6" text-anchor="middle">20:35</text><text class="ax" style="font-size:10.2px" x="607.3" y="992.6" text-anchor="middle">20:40</text><text class="ax" style="font-size:10.2px" x="673.08" y="992.6" text-anchor="middle">20:45</text><text class="ax" style="font-size:10.2px" x="738.86" y="992.6" text-anchor="middle">20:50</text><text class="ax" style="font-size:10.2px" x="804.64" y="992.6" text-anchor="middle">20:55</text><text class="ax" style="font-size:10.2px" x="870.42" y="992.6" text-anchor="middle">21:00</text><text class="ax" style="font-size:10.2px" x="936.2" y="992.6" text-anchor="middle">21:05</text><text class="ax" style="font-size:10.2px" x="1001.98" y="992.6" text-anchor="middle">21:10</text><path d="M273.3 976.3 L300 976.2 L302 975.3 L350 975.3 L355 974.5 L404 974.5 L406 973.5 L457 973.5 L459 972.8 L508 972.8 L510 972.2 L552.9 971.6 L690 971.6 L693 972.3 L741 972.3 L744 973.3 L1058 973.3 L1061 972.3" fill="none" stroke="#73bf69" stroke-width="1.2" stroke-linejoin="round" stroke-opacity="0.8"/><path d="M273.3 956.3 L280 953.5 L288 949.78 L300 947.5 L308 943.66 L320 941.3 L328 937.08 L340 934.5 L348 930.66 L360 928.3 L368 923.77 L380 921 L388 916.66 L400 914 L408 909.97 L420 907.5 L428 903.16 L440 900.5 L448 896.16 L460 893.5 L468 888.85 L480 886 L488 881.35 L500 878.5 L508 874.16 L520 871.5 L528 867.47 L540 865 L548 861.59 L560 859.5 L568 856.09 L580 854 L598 850 L604.6 849.4 L629.8 849.4 L639.4 852 L649 855.5 L660 856.1 L679.2 862.1 L697 867 L715.3 872.9 L724.9 878.11 L739.3 881.3 L755 887 L764.6 890.5 L898 890.5 L916 893.4 L1015.8 893.4 L1025.4 890.5 L1035 890.5 L1040.2 887.65 L1048 885.9 L1053.2 883.05 L1061 881.3" fill="none" stroke="#fade2a" stroke-width="1.2" stroke-linejoin="round" stroke-opacity="0.8"/>
</svg>
<div class="ptitle" style="left:263.5px;top:799.1px;height:14px;line-height:14px">Requests Prefill and Decode Time</div>
<div class="lg" style="left:263px;top:1003.2px"><i style="background:#73bf69"></i><span>Prefill</span><i style="background:#fade2a"></i><span>Decode</span></div>
<div class="panel" style="left:1084px;top:790px;width:824px;height:236.5px"></div>
<svg class="abs" style="left:1084px;top:790px" width="824" height="236.5" viewBox="1084 790 824 236.5">
<path d="M1128.1 836.2V980" stroke="#2d3035" stroke-width="1"/><path d="M1192.25 836.2V980" stroke="#2d3035" stroke-width="1"/><path d="M1256.4 836.2V980" stroke="#2d3035" stroke-width="1"/><path d="M1320.55 836.2V980" stroke="#2d3035" stroke-width="1"/><path d="M1384.7 836.2V980" stroke="#2d3035" stroke-width="1"/><path d="M1448.85 836.2V980" stroke="#2d3035" stroke-width="1"/><path d="M1513 836.2V980" stroke="#2d3035" stroke-width="1"/><path d="M1577.15 836.2V980" stroke="#2d3035" stroke-width="1"/><path d="M1641.3 836.2V980" stroke="#2d3035" stroke-width="1"/><path d="M1705.45 836.2V980" stroke="#2d3035" stroke-width="1"/><path d="M1769.6 836.2V980" stroke="#2d3035" stroke-width="1"/><path d="M1833.75 836.2V980" stroke="#2d3035" stroke-width="1"/><path d="M1122.1 855.1H1894.2" stroke="#2d3035" stroke-width="1"/><path d="M1122.1 880.1H1894.2" stroke="#2d3035" stroke-width="1"/><path d="M1122.1 904.4H1894.2" stroke="#2d3035" stroke-width="1"/><path d="M1122.1 929.2H1894.2" stroke="#2d3035" stroke-width="1"/><path d="M1122.1 953.5H1894.2" stroke="#2d3035" stroke-width="1"/><path d="M1122.1 978.2H1894.2" stroke="#2d3035" stroke-width="1"/><text class="ax" style="font-size:10.8px" x="1118" y="857.6" text-anchor="end">2500</text><text class="ax" style="font-size:10.8px" x="1118" y="882.6" text-anchor="end">2000</text><text class="ax" style="font-size:10.8px" x="1118" y="906.9" text-anchor="end">1500</text><text class="ax" style="font-size:10.8px" x="1118" y="931.7" text-anchor="end">1000</text><text class="ax" style="font-size:10.8px" x="1118" y="956" text-anchor="end">500</text><text class="ax" style="font-size:10.8px" x="1118" y="980.7" text-anchor="end">0</text><text class="ax" style="font-size:10.2px" x="1128.1" y="992.6" text-anchor="middle">20:15</text><text class="ax" style="font-size:10.2px" x="1192.25" y="992.6" text-anchor="middle">20:20</text><text class="ax" style="font-size:10.2px" x="1256.4" y="992.6" text-anchor="middle">20:25</text><text class="ax" style="font-size:10.2px" x="1320.55" y="992.6" text-anchor="middle">20:30</text><text class="ax" style="font-size:10.2px" x="1384.7" y="992.6" text-anchor="middle">20:35</text><text class="ax" style="font-size:10.2px" x="1448.85" y="992.6" text-anchor="middle">20:40</text><text class="ax" style="font-size:10.2px" x="1513" y="992.6" text-anchor="middle">20:45</text><text class="ax" style="font-size:10.2px" x="1577.15" y="992.6" text-anchor="middle">20:50</text><text class="ax" style="font-size:10.2px" x="1641.3" y="992.6" text-anchor="middle">20:55</text><text class="ax" style="font-size:10.2px" x="1705.45" y="992.6" text-anchor="middle">21:00</text><text class="ax" style="font-size:10.2px" x="1769.6" y="992.6" text-anchor="middle">21:05</text><text class="ax" style="font-size:10.2px" x="1833.75" y="992.6" text-anchor="middle">21:10</text><path d="M1122.1 853.7 L1130 853.5 L1134 852.5 L1140 854.5 L1160 854.5 L1164 853.7 L1180 853.7 L1184 854.6 L1190 853.5 L1195 854.3 L1207 854.3 L1212 855.3 L1225 855.3 L1232 853.2 L1240 852.5 L1248 853.8 L1255 854.5 L1275 854.5 L1281 853.6 L1289 854.6 L1296 853.7 L1310 853.7 L1315 854.6 L1320 853.6 L1335 853.6 L1340 852.6 L1345 853.6 L1354 853.6 L1358 852.6 L1372 852.6 L1378 853.8 L1390 853.8 L1396 854.7 L1403 853.7 L1447 853.7 L1452 853 L1467.5 853 L1474.2 872.9 L1480.2 901.1 L1486.7 901.1 L1500 936 L1507.2 976.3 L1513.2 978.2 L1532.5 978.2 L1538.5 976.3 L1551.7 958.3 L1557.7 959.5 L1564.9 967.9 L1570.9 978.2 L1576.9 978.2 L1582.9 976.3 L1597.4 976.3 L1602.9 978.2 L1621.4 857.3 L1629.8 853 L1637 852.6 L1643 853.5 L1648 852.6 L1655 853.4 L1667 853.4 L1672 854.2 L1677 853.4 L1685 854.4 L1693 855.3 L1700 854.5 L1708 854.5 L1715 853.5 L1732 853.7 L1738 863.3 L1742.8 895.8 L1751.2 906.6 L1757.2 897 L1764.4 862.1 L1770.4 853.7 L1820 853.7 L1826 852.8 L1833 852.3 L1840 853.5 L1846 853.9 L1851 853 L1864 853 L1870 853.9 L1875 853 L1891.8 852.6" fill="none" stroke="#73bf69" stroke-width="1.2" stroke-linejoin="round" stroke-opacity="0.8"/>
</svg>
<div class="ptitle" style="left:1093.5px;top:799.1px;height:14px;line-height:14px">Max Generation Token in Sequence Group</div>
<div class="lg" style="left:1093px;top:1003.2px"><i style="background:#73bf69"></i><span>Tokens</span></div>
<div class="abs" style="left:1884px;top:798px;width:16px;height:18px;border-radius:3px;background:#25282e"><svg class="abs" style="left:6px;top:4px" width="4" height="10" viewBox="0 0 4 10"><circle cx="2" cy="1.5" r="1" fill="#ccccdc"/><circle cx="2" cy="5" r="1" fill="#ccccdc"/><circle cx="2" cy="8.5" r="1" fill="#ccccdc"/></svg></div>
</div>
</body></html>
